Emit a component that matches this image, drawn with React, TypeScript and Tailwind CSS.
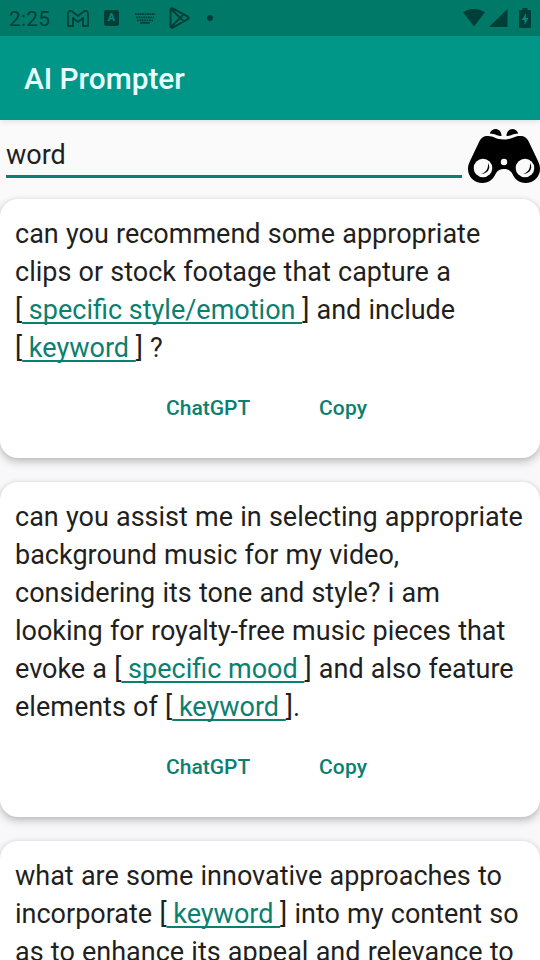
import type { ReactNode } from "react";

function StatusBar() {
  return (
    <header className="flex h-9 shrink-0 items-center bg-[#007969] text-[#003f39]">
      <span className="ml-[9px] w-[58px] pt-px text-[21px] leading-9 tracking-[0.2px]">2:25</span>
      <svg width="22" height="17" viewBox="0 0 22 17" fill="none" stroke="currentColor" strokeWidth="1.8" strokeLinejoin="round">
        <path d="M1 3.2V16h5V8l5 4 5-4v8h5V3.200C21 1 18.600.2 17 1.400L11 6 5 1.400C3.400.2 1 1 1 3.200Z" />
      </svg>
      <span className="ml-[15px] flex h-[16px] w-[15px] flex-col items-center rounded-[2px] bg-[#003f39] text-[11px] font-bold leading-[15px] text-[#00897a]">
        A
      </span>
      <svg className="ml-[16px]" width="20" height="11" viewBox="0 0 20 11" fill="none" stroke="currentColor" strokeWidth="1.7">
        <path d="M0 1.2h20M1 4.4h18M2 7.4h16" strokeDasharray="1.8 .6" />
        <path d="M5 9.900h10" strokeWidth="1.5" />
      </svg>
      <svg className="ml-[14px]" width="21" height="22" viewBox="0 0 21 22" fill="none" stroke="currentColor" strokeWidth="2" strokeLinejoin="round">
        <path d="M1.500 3C1.500 1.500 3 1 4.200 1.700L18.800 9.600c1 .6 1 2 0 2.600L4.200 20.300c-1.200.7-2.700.2-2.700-1.300ZM2 2l12.700 12.400M2 20 14.700 7.400" />
      </svg>
      <span className="ml-[17px] size-[6px] rounded-full bg-[#003f39]" />
      <span className="grow" />
      <svg width="22" height="18" viewBox="0 0 22 18" fill="currentColor">
        <path d="M0 3.200C6.500-1.100 15.500-1.100 22 3.200L11 17.500Z" />
      </svg>
      <svg className="ml-[4px]" width="19" height="18" viewBox="0 0 19 18" fill="currentColor">
        <path d="M18.500 0v18H0Z" />
      </svg>
      <svg className="ml-[11px] mr-[9px]" width="12" height="20" viewBox="0 0 12 20">
        <path fill="currentColor" d="M3.500 2V0h5v2H11q1 0 1 1v16q0 1-1 1H1q-1 0-1-1V3q0-1 1-1Z" />
        <path fill="#00897a" d="M7 5 2.800 12h2.700v5L9.300 10H6.700Z" />
      </svg>
    </header>
  );
}

function Binoculars() {
  return (
    <svg className="shrink-0" width="72" height="56" viewBox="0 0 72 56">
      <path
        fill="#000"
        d="M20 8C15.500 8 13 10 11.300 13.500L2.500 32C.8 35.500 0 37.500 0 41c0 8 6.500 14 14.500 14C21 55 25 51.500 27.500 46c1.700-3.500 4.500-5 8.500-5s6.800 1.500 8.500 5C47 51.500 51 55 57.500 55 65.500 55 72 49 72 41c0-3.500-.8-5.500-2.500-9L60.700 13.500C59 10 56.500 8 52 8 46.500 8 44 11.500 36 11.500S25.500 8 20 8Z"
      />
      <path fill="#000" d="M21.800 5.600C23.500-.6 33-1 33.600 7.800 30 8.800 28 5.800 21.800 5.600ZM50.200 5.600C48.500-.6 39-1 38.400 7.800 42 8.800 44 5.800 50.200 5.600Z" />
      <circle cx="15" cy="40" r="9.300" fill="#fafafa" />
      <circle cx="57" cy="40" r="9.300" fill="#fafafa" />
      <circle cx="36" cy="34" r="3.200" fill="#fafafa" />
      <path fill="#000" d="M20 35c3.200 5-.2 10.500-6.500 11C18 44 20.500 41 20 35ZM62 35c3.200 5-.2 10.500-6.500 11C60 44 62.500 41 62 35Z" />
    </svg>
  );
}

function Slot({ children }: { children: string }) {
  return (
    <>
      [
      <span className="whitespace-pre text-[#0b8070] underline decoration-[1.5px] underline-offset-[3px] [text-decoration-skip-ink:none] [word-spacing:0px]">
        {` ${children} `}
      </span>
      ]
    </>
  );
}

function PromptCard({ lines }: { lines: ReactNode[] }) {
  return (
    <article className="shrink-0 rounded-[18px] bg-white px-[15px] pt-4 shadow-[0_4px_9px_rgba(0,0,0,0.22),0_0_5px_rgba(0,0,0,0.08)]">
      <div className="text-[27px] leading-[38px] text-[#1f1f21] [word-spacing:0.5px]">
        {lines.map((line, i) => (
          <p key={i} className="whitespace-nowrap">
            {line}
          </p>
        ))}
      </div>
      <div className="flex h-[91px] pl-[151px] pt-[23px] text-[21px] font-medium leading-[36px] text-[#0b8070]">
        <button className="h-9 w-[153px] text-left">ChatGPT</button>
        <button className="h-9 text-left tracking-[0.15px]">Copy</button>
      </div>
    </article>
  );
}

export default function App() {
  return (
    <div className="flex h-[960px] w-[540px] flex-col overflow-hidden bg-[#f8f7f9] font-['Roboto',sans-serif]">
      <StatusBar />
      <div className="relative flex h-[84px] shrink-0 items-center bg-[#009788] pt-[2px] pl-6 text-[29.8px] font-medium text-[#e9fffc] shadow-[0_1px_6px_rgba(0,0,0,0.12)]">
        <h1 className="leading-[40px]">AI Prompter</h1>
      </div>
      <div className="flex h-[79px] shrink-0 bg-[#fafafa] pt-2 pl-[6px]">
        <div className="mr-[6px] h-[50px] w-[456px] border-b-[3px] border-[#0b8070] text-[27px] leading-[54px] text-[#1f1f21]">word</div>
        <Binoculars />
      </div>
      <main className="flex shrink-0 flex-col gap-6">
        <PromptCard
          lines={[
            "can you recommend some appropriate",
            "clips or stock footage that capture a",
            <><Slot>specific style/emotion</Slot> and include</>,
            <><Slot>keyword</Slot> ?</>,
          ]}
        />
        <PromptCard
          lines={[
            "can you assist me in selecting appropriate",
            "background music for my video,",
            "considering its tone and style? i am",
            "looking for royalty-free music pieces that",
            <>evoke a <Slot>specific mood</Slot> and also feature</>,
            <>elements of <Slot>keyword</Slot>.</>,
          ]}
        />
        <PromptCard
          lines={[
            "what are some innovative approaches to",
            <>incorporate <Slot>keyword</Slot> into my content so</>,
            "as to enhance its appeal and relevance to",
          ]}
        />
      </main>
    </div>
  );
}
